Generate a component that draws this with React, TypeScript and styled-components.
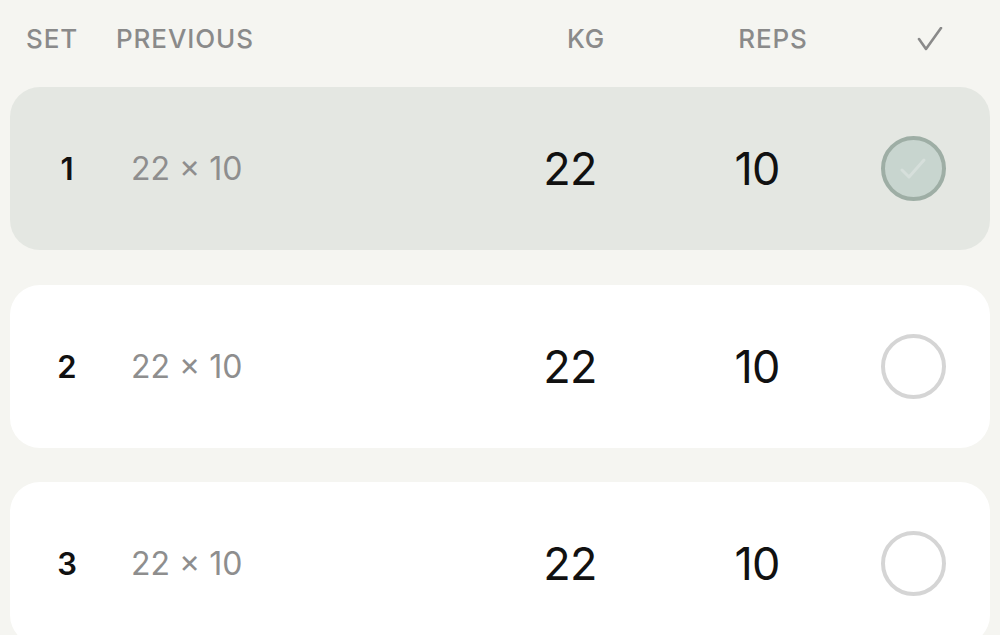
import styled, { createGlobalStyle } from 'styled-components';

const GlobalStyle = createGlobalStyle`
  html, body {
    margin: 0;
    padding: 0;
    background: #f5f5f1;
  }
  body {
    font-family: Inter, "Noto Sans", sans-serif;
    -webkit-font-smoothing: antialiased;
  }
`;

const Page = styled.div`
  width: 1000px;
  height: 635px;
  overflow: hidden;
  background: #f5f5f1;
`;

const Header = styled.div`
  display: grid;
  grid-template-columns: 90px 384px 172px 202px 112px;
  align-items: center;
  height: 77px;
  padding: 0 0 0 26px;
  color: #8a8a8a;
  font-size: 26px;
  font-weight: 500;
  letter-spacing: 0.9px;
`;

const HeadCell = styled.div<{ $center?: boolean }>`
  display: flex;
  justify-content: ${(p) => (p.$center ? 'center' : 'flex-start')};
`;

const List = styled.div`
  display: flex;
  flex-direction: column;
  gap: 34.5px;
  padding: 10px 10px 0;
`;

const Row = styled.div<{ $done?: boolean }>`
  display: grid;
  grid-template-columns: 114px 356px 180px 194px 118px;
  align-items: center;
  height: 163px;
  border-radius: 30px;
  background: ${(p) => (p.$done ? '#e4e7e2' : '#ffffff')};
`;

const SetNum = styled.div`
  text-align: center;
  font-size: 31px;
  font-weight: 600;
  color: #111;
`;

const Previous = styled.div`
  padding-left: 7px;
  font-size: 32px;
  font-weight: 400;
  color: #8e8e8e;
`;

const Value = styled.div`
  text-align: center;
  font-size: 45px;
  font-weight: 400;
  color: #111;
  letter-spacing: -0.8px;
`;

const CheckCell = styled.div`
  display: flex;
  justify-content: center;
`;

const Circle = styled.div<{ $done?: boolean }>`
  box-sizing: border-box;
  width: 65px;
  height: 65px;
  border-radius: 50%;
  border: 4px solid ${(p) => (p.$done ? '#9eaea5' : '#d5d5d5')};
  background: ${(p) => (p.$done ? '#c8d5cf' : '#ffffff')};
  display: flex;
  align-items: center;
  justify-content: center;
`;

const sets = [
  { n: 1, prev: '22 × 10', kg: 22, reps: 10, done: true },
  { n: 2, prev: '22 × 10', kg: 22, reps: 10, done: false },
  { n: 3, prev: '22 × 10', kg: 22, reps: 10, done: false },
];

export default function App() {
  return (
    <Page>
      <GlobalStyle />
      <Header>
        <HeadCell>SET</HeadCell>
        <HeadCell>PREVIOUS</HeadCell>
        <HeadCell $center>KG</HeadCell>
        <HeadCell $center>REPS</HeadCell>
        <HeadCell $center>
          <svg width="26" height="24" viewBox="0 0 26 24" fill="none">
            <path d="M2 12 L9 22 L24 1" stroke="#8a8a8a" strokeWidth="2.6" strokeLinecap="round" strokeLinejoin="round" />
          </svg>
        </HeadCell>
      </Header>
      <List>
        {sets.map((s) => (
          <Row key={s.n} $done={s.done}>
            <SetNum>{s.n}</SetNum>
            <Previous>{s.prev}</Previous>
            <Value>{s.kg}</Value>
            <Value>{s.reps}</Value>
            <CheckCell>
              <Circle $done={s.done}>
                {s.done && (
                  <svg width="28" height="24" viewBox="0 0 28 24" fill="none">
                    <path d="M3 13 L10 20 L25 3" stroke="#d6dfdb" strokeWidth="3" strokeLinecap="round" strokeLinejoin="round" />
                  </svg>
                )}
              </Circle>
            </CheckCell>
          </Row>
        ))}
      </List>
    </Page>
  );
}
